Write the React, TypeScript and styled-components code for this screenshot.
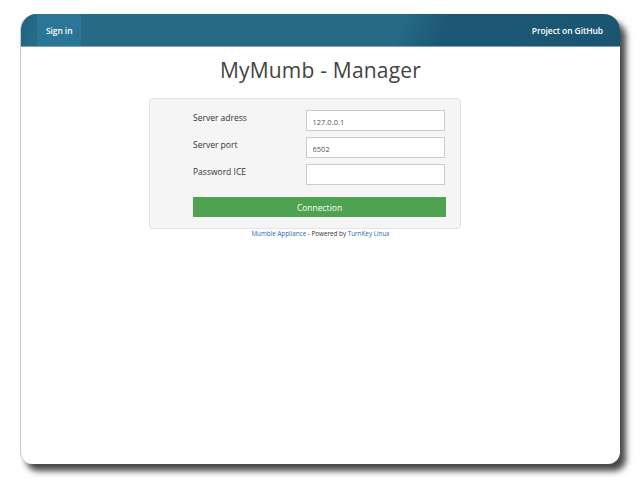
import React from 'react';
import styled, { createGlobalStyle } from 'styled-components';

const GlobalStyle = createGlobalStyle`
  html, body {
    margin: 0;
    padding: 0;
    background: #ffffff;
  }
  body {
    font-family: "Open Sans", "Liberation Sans", sans-serif;
  }
`;

const Page = styled.div`
  width: 640px;
  height: 480px;
  padding: 14px 0 0 20px;
  box-sizing: border-box;
`;

const Window = styled.div`
  width: 600px;
  height: 450px;
  background: #fff;
  border-radius: 16px 16px 12px 12px;
  border-left: 1px solid #c9c9c9;
  box-sizing: border-box;
  overflow: hidden;
  box-shadow: 6px 7px 6px rgba(0, 0, 0, 0.72);
  display: flex;
  flex-direction: column;
`;

const Navbar = styled.div`
  height: 32px;
  flex-shrink: 0;
  display: flex;
  justify-content: space-between;
  align-items: stretch;
  padding: 0 17px 0 16px;
  background: linear-gradient(
    112deg,
    #1f5e79 0%,
    #266a86 3%,
    #266a86 63%,
    #1c5874 70%,
    #1a5672 100%
  );
  border-bottom: 1px solid #7fa3b4;
`;

const NavLink = styled.a<{ $active?: boolean }>`
  display: flex;
  align-items: center;
  padding: 0 ${(p) => (p.$active ? '9px' : '0')};
  background: ${(p) => (p.$active ? '#2b7696' : 'transparent')};
  color: #ffffff;
  font-size: 8.5px;
  font-weight: 600;
  text-decoration: none;
  letter-spacing: -0.1px;
`;

const Content = styled.div`
  display: flex;
  flex-direction: column;
  align-items: center;
`;

const Title = styled.h1`
  margin: 9px 0 0;
  font-size: 21px;
  line-height: 28px;
  font-weight: 400;
  color: #444444;
  letter-spacing: 0.2px;
`;

const Panel = styled.div`
  align-self: flex-start;
  width: 312px;
  margin: 14px 0 0 128px;
  padding: 11px 15px 11px 43px;
  box-sizing: border-box;
  background: #f5f5f5;
  border: 1px solid #e3e3e3;
  border-radius: 4px;
  display: flex;
  flex-direction: column;
  gap: 6px;
`;

const Row = styled.div`
  display: flex;
  align-items: flex-start;
`;

const Label = styled.label`
  width: 113px;
  padding-top: 2px;
  font-size: 8.5px;
  line-height: 12px;
  color: #333333;
`;

const Input = styled.input`
  width: 140px;
  height: 21px;
  box-sizing: border-box;
  border: 1px solid #cccccc;
  background: #ffffff;
  padding: 2px 6px 0;
  font-family: "Open Sans", "Liberation Sans", sans-serif;
  font-size: 7.5px;
  color: #555555;
  outline: none;
`;

const Button = styled.button`
  margin-top: 6px;
  width: 253px;
  height: 20px;
  border: none;
  background: #4fa24f;
  color: #ffffff;
  font-family: "Open Sans", "Liberation Sans", sans-serif;
  font-size: 8.5px;
  font-weight: 500;
`;

const Footer = styled.p`
  margin: 0;
  font-size: 6.3px;
  line-height: 10px;
  color: #333333;
`;

const FooterLink = styled.a`
  color: #2a6db0;
  text-decoration: none;
`;

export default function App() {
  return (
    <Page>
      <GlobalStyle />
      <Window>
        <Navbar>
          <NavLink $active>Sign in</NavLink>
          <NavLink>Project on GitHub</NavLink>
        </Navbar>
        <Content>
          <Title>MyMumb - Manager</Title>
          <Panel>
            <Row>
              <Label>Server adress</Label>
              <Input defaultValue="127.0.0.1" />
            </Row>
            <Row>
              <Label>Server port</Label>
              <Input defaultValue="6502" />
            </Row>
            <Row>
              <Label>Password ICE</Label>
              <Input type="password" />
            </Row>
            <Button>Connection</Button>
          </Panel>
          <Footer>
            <FooterLink>Mumble Appliance</FooterLink> - Powered by{' '}
            <FooterLink>TurnKey Linux</FooterLink>
          </Footer>
        </Content>
      </Window>
    </Page>
  );
}
